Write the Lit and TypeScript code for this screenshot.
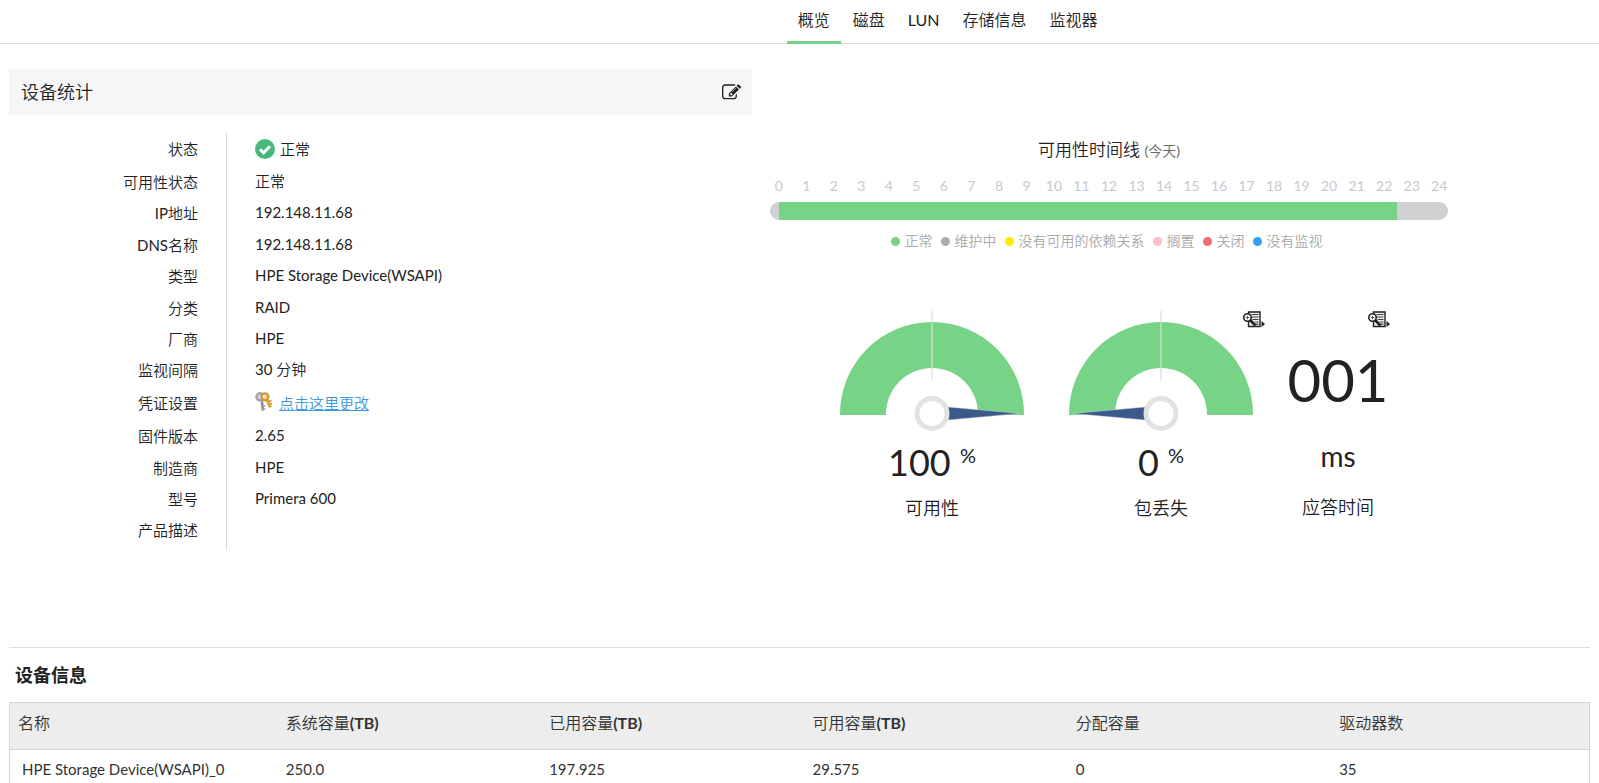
import { LitElement, html, css, svg, nothing } from "lit";
import { customElement, property } from "lit/decorators.js";

interface StatRow {
  label: string;
  value: string;
  kind?: "status" | "link";
}

const tabs = ["概览", "磁盘", "LUN", "存储信息", "监视器"];

const stats: StatRow[] = [
  { label: "状态", value: "正常", kind: "status" },
  { label: "可用性状态", value: "正常" },
  { label: "IP地址", value: "192.148.11.68" },
  { label: "DNS名称", value: "192.148.11.68" },
  { label: "类型", value: "HPE Storage Device(WSAPI)" },
  { label: "分类", value: "RAID" },
  { label: "厂商", value: "HPE" },
  { label: "监视间隔", value: "30 分钟" },
  { label: "凭证设置", value: "点击这里更改", kind: "link" },
  { label: "固件版本", value: "2.65" },
  { label: "制造商", value: "HPE" },
  { label: "型号", value: "Primera 600" },
  { label: "产品描述", value: "" },
];

const legend = [
  ["ok", "正常"],
  ["maintenance", "维护中"],
  ["dependency", "没有可用的依赖关系"],
  ["hold", "搁置"],
  ["down", "关闭"],
  ["unmonitored", "没有监视"],
];

const columns = [
  ["名称", ""],
  ["系统容量", "(TB)"],
  ["已用容量", "(TB)"],
  ["可用容量", "(TB)"],
  ["分配容量", ""],
  ["驱动器数", ""],
];

const devices = [["HPE Storage Device(WSAPI)_0", "250.0", "197.925", "29.575", "0", "35"]];

const reportIcon = svg`
  <path d="M5.500 1h11.500v14.500h-11.500z" fill="#eee" stroke="#222" stroke-width="1.400"/>
  <path d="M8.500 3.500h7M8.500 6h7M9.500 8.500h6M12 11h3.500M13 13.200h2.500" stroke="#444" stroke-width="1.200" fill="none"/>
  <circle cx="4.500" cy="6.500" r="3.700" fill="#fff" stroke="#222" stroke-width="1.600"/>
  <path d="M2.800 6.500h3.400M4.500 4.800v3.400" stroke="#555"/>
  <path d="M7.200 9.200l5.300 5.300" stroke="#222" stroke-width="2.800"/>
  <path d="M18.500 10v6l3.500-3z" fill="#222"/>`;

@customElement("dial-gauge")
export class DialGauge extends LitElement {
  @property({ type: Number }) value = 0;

  static styles = css`
    :host {
      display: block;
    }
    .dial {
      display: block;
      margin: 0 auto;
    }
    .band {
      fill: #77d385;
    }
    .tick {
      fill: #dcdcdc;
      opacity: 0.6;
    }
    .needle {
      fill: #3a5a8a;
      stroke: #ccd6e4;
      stroke-width: 0.5;
    }
    .hub {
      fill: #fff;
      stroke: #e2e2e2;
      stroke-width: 5;
    }
  `;

  render() {
    const turn = (this.value / 100) * 180;
    return html`
      <svg class="dial" width="184" height="122" viewBox="0 0 184 122" role="img" aria-label="${this.value}%">
        <path class="band" d="M0 104v-1a92 92 0 0 1 184 0v1h-46v-1a46 46 0 0 0-92 0v1z" />
        <rect class="tick" x="91" y="0" width="2" height="69" />
        <path class="needle" d="M4 102.500L76 96v13z" transform="rotate(${turn} 92 102.500)" />
        <circle class="hub" cx="92" cy="102.500" r="15" />
      </svg>
    `;
  }
}

@customElement("app-root")
export class AppRoot extends LitElement {
  static styles = css`
    :host {
      display: block;
      font-family: Lato, "Noto Sans CJK SC DemiLight", "Noto Sans CJK SC Light", "Noto Sans CJK SC", sans-serif;
      font-size: 15px;
      line-height: 20px;
      color: #222;
      background: #fff;
    }
    a {
      color: inherit;
      text-decoration: none;
    }
    button {
      padding: 0;
      border: 0;
      background: none;
      color: inherit;
      cursor: pointer;
    }
    svg {
      display: block;
    }
    .tabs {
      display: flex;
      gap: 1px;
      height: 43px;
      padding-left: 49.2%;
      border-bottom: 1px solid #dcdfdd;
      font-size: 16px;
    }
    .tab {
      height: 41px;
      padding: 0 11px;
      line-height: 40px;
      border-bottom: 3px solid transparent;
    }
    .tab.active {
      border-color: #77d385;
    }
    main {
      padding: 25px 9px 0;
    }
    .overview {
      display: grid;
      grid-template-columns: 47% 1fr;
      padding-bottom: 97px;
      border-bottom: 1px solid #dedede;
    }
    .panel-head {
      display: flex;
      align-items: center;
      justify-content: space-between;
      height: 46px;
      padding: 0 11px 0 12px;
      background: #f4f6f8;
    }
    h2 {
      margin: 0;
      font-size: 18px;
      line-height: 28px;
      font-weight: 400;
    }
    .stats {
      display: flex;
      flex-direction: column;
      min-height: 414px;
      margin: 17px 0 0;
      padding-bottom: 4px;
      background: linear-gradient(#dcdcdc, #dcdcdc) 217px 0 / 1px 100% no-repeat;
    }
    .stat {
      display: grid;
      grid-template-columns: 217px 1fr;
      align-items: center;
      flex: 1 0 31px;
    }
    .stat.tall {
      flex-basis: 34px;
    }
    .stat dt {
      padding-right: 28px;
      text-align: right;
    }
    .stat dd {
      display: flex;
      align-items: center;
      gap: 5px;
      margin: 0 0 0 29px;
      padding-bottom: 2px;
    }
    .stat.tall dd {
      padding-bottom: 0;
    }
    .change {
      color: #3d98e0;
      text-decoration: underline;
    }
    .health {
      padding: 69px 142px 0 18px;
    }
    .health h3 {
      margin: 0;
      font-size: 17px;
      line-height: 24px;
      font-weight: 400;
      text-align: center;
    }
    .period {
      font-size: 14px;
      color: #666;
    }
    .hours {
      display: flex;
      margin: 13px -5px 6px;
      font-size: 14px;
      color: #c9c9cc;
    }
    .hour {
      flex: 1;
      text-align: center;
    }
    .timeline {
      padding: 0 9px;
      border-radius: 9px;
      background: #d0d0d2;
    }
    .uptime {
      height: 18px;
      background: #77d385;
    }
    .legend {
      display: flex;
      justify-content: center;
      gap: 8px;
      margin: 11px 5px 0 0;
      padding: 0;
      list-style: none;
      font-size: 14px;
      color: #a9a9a9;
      white-space: nowrap;
    }
    .legend li {
      display: flex;
      align-items: center;
      gap: 5px;
    }
    .dot {
      width: 9px;
      height: 9px;
      border-radius: 50%;
    }
    .ok {
      background: #77d385;
    }
    .maintenance {
      background: #adadad;
    }
    .dependency {
      background: #ffeb00;
    }
    .hold {
      background: #fbc0cb;
    }
    .down {
      background: #ee6e73;
    }
    .unmonitored {
      background: #329ff0;
    }
    .metrics {
      display: flex;
      justify-content: center;
      margin-top: 60px;
      text-align: center;
    }
    .metric {
      position: relative;
      width: 229px;
    }
    .metric.response {
      width: 125px;
    }
    .report {
      position: absolute;
      top: 0;
      right: 11px;
    }
    .reading {
      margin-top: 7px;
      font-size: 36px;
      line-height: 44px;
    }
    .reading sup {
      font-size: 20px;
      line-height: 20px;
      vertical-align: 13px;
    }
    .metric-name {
      margin-top: 10px;
      font-size: 18px;
      line-height: 28px;
    }
    .counter {
      margin-top: 33px;
      font-size: 58px;
      line-height: 72px;
    }
    .unit {
      margin-top: 23px;
      font-size: 28px;
      line-height: 34px;
    }
    .response .metric-name {
      margin-top: 20px;
    }
    .devices h2 {
      padding: 13px 6px;
      font-family: Lato, "Noto Sans CJK SC", sans-serif;
      font-weight: 700;
    }
    table {
      width: 100%;
      table-layout: fixed;
      border-collapse: collapse;
      border: 1px solid #d4d4d4;
      color: #333;
    }
    th,
    td {
      padding: 9px 0 11px 13px;
      text-align: left;
    }
    th {
      padding: 8px 0 14px 13px;
      font-size: 16px;
      line-height: 24px;
      font-weight: 400;
      background: #ededed;
      border-bottom: 1px solid #d4d4d4;
    }
    th:first-child {
      padding-left: 8px;
    }
    td:first-child {
      padding-left: 12px;
    }
  `;

  private statValue(row: StatRow) {
    if (row.kind === "status") {
      return html`
        <svg width="20" height="20" viewBox="0 0 20 20" aria-hidden="true">
          <circle cx="10" cy="10" r="10" fill="#45b97c" />
          <path d="M5 10.200l3.600 3.600L15 7.200" fill="none" stroke="#fff" stroke-width="3" />
        </svg>
        <span>${row.value}</span>
      `;
    }
    if (row.kind === "link") {
      return html`
        <svg width="19" height="22" viewBox="0 0 19 22" aria-hidden="true">
          <path d="M6.500 6l1.500 12.500" stroke="#8d9299" stroke-width="2.600" />
          <path d="M8.500 14h2M8.500 17h2" stroke="#a8acb2" stroke-width="1.500" />
          <circle cx="5" cy="4.800" r="3.600" fill="#d5d6da" stroke="#a3a6ad" stroke-width="2.400" />
          <path d="M11 6l4.500 9.500" stroke="#e0a83c" stroke-width="3" />
          <path d="M14 9.500l2.500-1M15 12.500l2-1" stroke="#c98f2c" stroke-width="1.500" />
          <circle cx="10" cy="4.800" r="3.500" fill="#f3d68a" stroke="#d79a33" stroke-width="2.200" />
          <circle cx="9" cy="4.500" r="1.200" fill="#fff" />
        </svg>
        <a class="change" href="#credentials">${row.value}</a>
      `;
    }
    return row.value;
  }

  private reportButton(name: string) {
    return html`
      <button class="report" type="button" aria-label=${name}>
        <svg width="22" height="17" viewBox="0 0 22 17" aria-hidden="true">${reportIcon}</svg>
      </button>
    `;
  }

  render() {
    return html`
      <nav class="tabs">
        ${tabs.map(
          (tab, i) => html`<a class="tab ${i === 0 ? "active" : ""}" href="#tab-${i}" aria-current=${i === 0 ? "page" : nothing}>${tab}</a>`
        )}
      </nav>
      <main>
        <div class="overview">
          <section>
            <header class="panel-head">
              <h2>设备统计</h2>
              <button type="button" aria-label="编辑">
                <svg width="19" height="19" viewBox="0 0 1792 1792" fill="currentColor" aria-hidden="true">
                  <path
                    d="M888 1184l116-116-152-152-116 116v56h96v96h56zm440-720q-16-16-33 1l-350 350q-17 17-1 33t33-1l350-350q17-17 1-33zm80 594v190q0 119-84.500 203.500t-203.500 84.500h-832q-119 0-203.500-84.500t-84.500-203.500v-832q0-119 84.500-203.500t203.500-84.500h832q63 0 117 25 15 7 18 23 3 17-9 29l-49 49q-14 14-32 8-23-6-45-6h-832q-66 0-113 47t-47 113v832q0 66 47 113t113 47h832q66 0 113-47t47-113v-126q0-13 9-22l64-64q15-15 35-7t20 29zm-96-738l288 288-672 672h-288v-288zm444 132l-92 92-288-288 92-92q28-28 68-28t68 28l152 152q28 28 28 68t-28 68z"
                  />
                </svg>
              </button>
            </header>
            <dl class="stats">
              ${stats.map(
                (row) => html`
                  <div class="stat ${row.kind ? "tall" : ""}">
                    <dt>${row.label}</dt>
                    <dd>${this.statValue(row)}</dd>
                  </div>
                `
              )}
            </dl>
          </section>
          <section class="health">
            <h3>可用性时间线 <span class="period">(今天)</span></h3>
            <div class="hours">${Array.from({ length: 25 }, (_, h) => html`<span class="hour">${h}</span>`)}</div>
            <div class="timeline"><div class="uptime" style="width: 93.6%"></div></div>
            <ul class="legend">
              ${legend.map(([kind, name]) => html`<li><span class="dot ${kind}"></span>${name}</li>`)}
            </ul>
            <div class="metrics">
              <div class="metric">
                <dial-gauge .value=${100}></dial-gauge>
                <div class="reading">100 <sup>%</sup></div>
                <div class="metric-name">可用性</div>
              </div>
              <div class="metric">
                ${this.reportButton("包丢失")}
                <dial-gauge .value=${0}></dial-gauge>
                <div class="reading">0 <sup>%</sup></div>
                <div class="metric-name">包丢失</div>
              </div>
              <div class="metric response">
                ${this.reportButton("应答时间")}
                <div class="counter">001</div>
                <div class="unit">ms</div>
                <div class="metric-name">应答时间</div>
              </div>
            </div>
          </section>
        </div>
        <section class="devices">
          <h2>设备信息</h2>
          <table>
            <thead>
              <tr>
                ${columns.map(([name, unit]) => html`<th scope="col">${name}${unit ? html`<b>${unit}</b>` : nothing}</th>`)}
              </tr>
            </thead>
            <tbody>
              ${devices.map((cells) => html`<tr>${cells.map((cell) => html`<td>${cell}</td>`)}</tr>`)}
            </tbody>
          </table>
        </section>
      </main>
    `;
  }
}
